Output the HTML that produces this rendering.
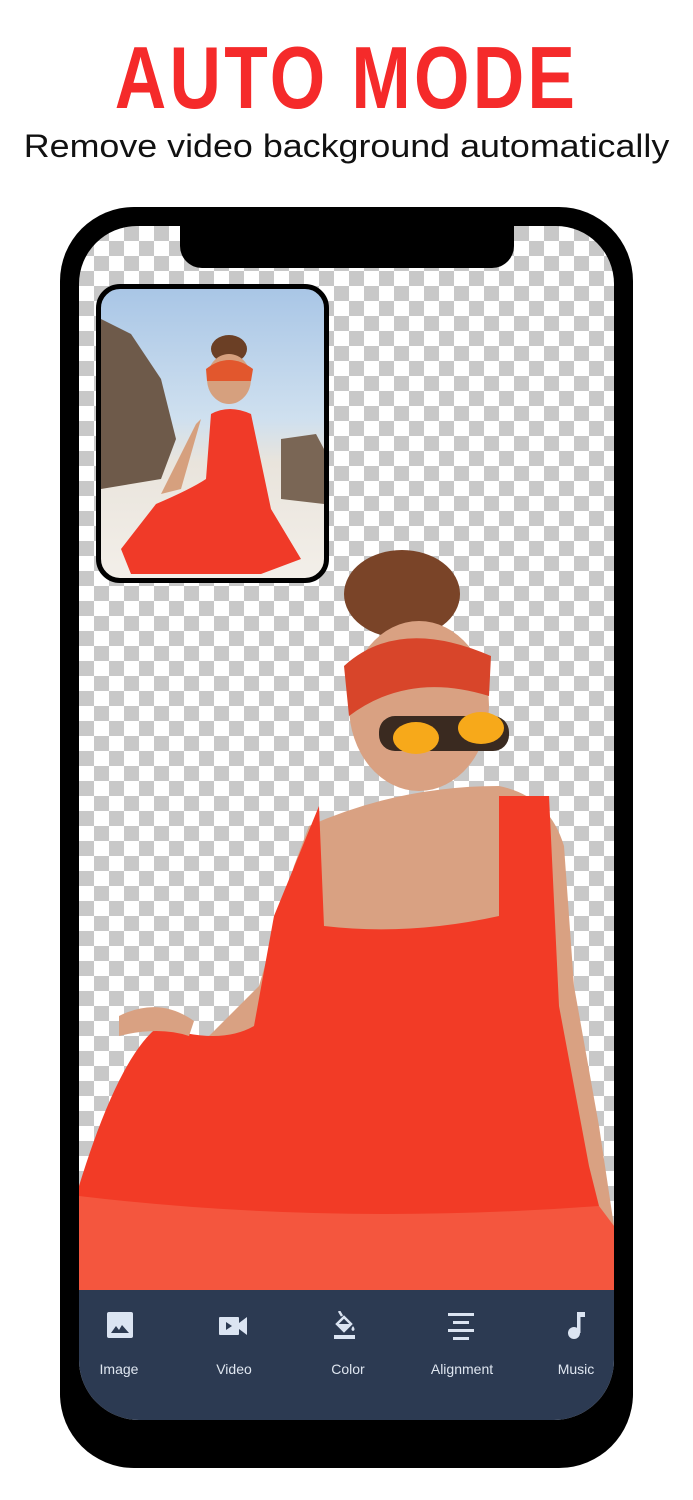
<!DOCTYPE html>
<html><head><meta charset="utf-8"><style>
html,body{margin:0;padding:0;width:693px;height:1500px;background:#fff;overflow:hidden;position:relative;font-family:"Liberation Sans",sans-serif}
.t1{position:absolute;top:28px;left:0;width:693px;text-align:center;font-size:88px;font-weight:bold;color:#f52a2a;letter-spacing:4px;line-height:100px;transform:scaleX(0.81)}
.t2{position:absolute;top:127px;left:0;width:693px;text-align:center;font-size:32px;color:#111;line-height:38px;transform:scaleX(1.12)}
.phone{position:absolute;left:60px;top:207px;width:573px;height:1261px;background:#000;border-radius:74px}
.screen{position:absolute;left:19px;top:19px;width:535px;height:1194px;border-radius:58px 58px 60px 60px;overflow:hidden;
background-color:#fff;background-image:conic-gradient(#c8c8c8 25%,#fff 0 50%,#c8c8c8 0 75%,#fff 0);background-size:30px 30px}
.notch{position:absolute;left:101px;top:0;width:334px;height:42px;background:#000;border-radius:0 0 22px 22px}
.inset{position:absolute;left:17px;top:58px;width:223px;height:289px;border:5px solid #000;border-radius:24px;overflow:hidden;background:linear-gradient(#a9c6e6 0,#cfe0ef 45%,#e9e4dc 60%,#f3efe9 100%)}
.bar{position:absolute;left:0;top:1064px;width:535px;height:130px;background:#2c3a52}
.it{position:absolute;top:1135px;width:100px;text-align:center;color:#dfe6f0;font-size:14px}
.ic{position:absolute;top:1086px}
</style></head><body>
<div class="t1">AUTO MODE</div>
<div class="t2">Remove video background automatically</div>
<div class="phone"><div class="screen">
<div class="notch"></div>
<div class="inset">
<svg width="223" height="289" viewBox="0 0 223 289">
<path d="M0 30 L30 45 L60 90 L75 150 L60 190 L0 200Z" fill="#6e5a4a"/>
<path d="M180 150 L215 145 L223 160 L223 215 L180 210Z" fill="#7a6655"/>
<ellipse cx="128" cy="60" rx="18" ry="14" fill="#6b3f25"/>
<ellipse cx="128" cy="90" rx="22" ry="25" fill="#d6a07e"/>
<path d="M105 80 Q128 62 152 80 L150 92 L106 92Z" fill="#e2572d"/>
<path d="M110 125 Q128 115 150 125 L170 220 L200 270 L160 285 L30 285 L20 260 L55 215 Q90 200 105 190Z" fill="#f03a28"/>
<path d="M100 130 L80 200 L60 205 L95 135Z" fill="#d6a07e"/>
</svg>
</div>
<svg style="position:absolute;left:0;top:0" width="535" height="1194" viewBox="0 0 535 1194">
<ellipse cx="323" cy="368" rx="58" ry="44" fill="#7a4428"/>
<ellipse cx="340" cy="480" rx="70" ry="85" fill="#d9a182"/>
<path d="M265 440 Q320 390 412 430 L410 470 Q330 445 270 490Z" fill="#d8452a"/>
<rect x="300" y="490" width="130" height="35" rx="16" fill="#3a2a20"/>
<ellipse cx="337" cy="512" rx="23" ry="16" fill="#f7a91a"/>
<ellipse cx="402" cy="502" rx="23" ry="16" fill="#f7a91a"/>
<path d="M230 600 Q320 560 420 560 Q470 570 485 620 L495 760 L520 900 L535 1000 L535 1064 L0 1064 L0 1000 Q60 900 120 820 L180 760 L215 640Z" fill="#d9a182"/>
<path d="M240 580 L245 700 Q330 710 420 690 L420 570 L470 570 L480 780 L510 940 L535 1040 L535 1064 L0 1064 L0 960 Q40 830 80 800 Q140 820 175 800 L195 690Z" fill="#f23b26"/>
<path d="M0 970 Q250 1000 520 980 L535 1000 L535 1064 L0 1064Z" fill="#f4563e"/>
<path d="M40 790 Q80 770 115 795 L110 810 Q80 800 40 810Z" fill="#d9a182"/>
</svg>
<div class="bar"></div>
<svg class="ic" style="left:28px" width="26" height="26" viewBox="0 0 26 26"><rect x="0" y="0" width="26" height="26" rx="2" fill="#dbe4f2"/><path d="M4 21 L9 14 L12 18 L15 13 L22 21Z" fill="#2c3a52"/></svg>
<div class="it" style="left:-10px">Image</div>
<svg class="ic" style="left:140px;top:1091px" width="28" height="18" viewBox="0 0 28 18"><rect x="0" y="0" width="20" height="18" rx="1" fill="#dbe4f2"/><path d="M20 6 L28 0 L28 18 L20 12Z" fill="#dbe4f2"/><path d="M7 5 L13 9 L7 13Z" fill="#2c3a52"/></svg>
<div class="it" style="left:105px">Video</div>
<svg class="ic" style="left:255px;top:1085px" width="24" height="30" viewBox="0 0 24 30"><path d="M5 0 L8 5 M3 13 L10 6 L17 13 L10 20Z" stroke="#dbe4f2" stroke-width="2.5" fill="none"/><path d="M3 13 L17 13 L10 20Z" fill="#dbe4f2"/><path d="M19 15 Q22 19 19 20 Q16 19 19 15Z" fill="#dbe4f2"/><rect x="0" y="24" width="21" height="4" fill="#dbe4f2"/></svg>
<div class="it" style="left:219px">Color</div>
<svg class="ic" style="left:369px;top:1087px" width="26" height="28" viewBox="0 0 26 28"><g fill="#dbe4f2"><rect x="0" y="0" width="26" height="3"/><rect x="5" y="8" width="16" height="3"/><rect x="0" y="16" width="26" height="3"/><rect x="5" y="24" width="16" height="3"/></g></svg>
<div class="it" style="left:333px">Alignment</div>
<svg class="ic" style="left:488px;top:1086px" width="20" height="28" viewBox="0 0 20 28"><circle cx="7" cy="21" r="6" fill="#dbe4f2"/><rect x="10" y="0" width="3.5" height="21" fill="#dbe4f2"/><rect x="10" y="0" width="8" height="5" fill="#dbe4f2"/></svg>
<div class="it" style="left:447px">Music</div>
</div></div>
</body></html>
